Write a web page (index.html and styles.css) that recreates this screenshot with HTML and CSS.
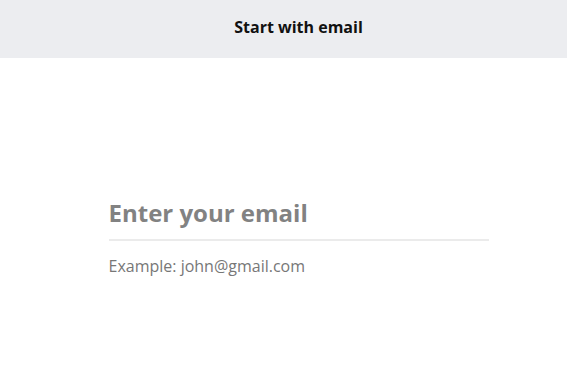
FILE: index.html
```html
<!DOCTYPE html>
<html>
<head>
<meta charset="utf-8">
<link rel="stylesheet" href="styles.css">
</head>
<body>
<header class="topbar"><h1 class="title">Start with email</h1></header>
<main class="content">
  <div class="field">
    <input class="email-input" type="email" placeholder="Enter your email">
    <p class="hint">Example: john@gmail.com</p>
  </div>
</main>
</body>
</html>
```
FILE: styles.css
```css
* { box-sizing: border-box; }
html, body { margin: 0; padding: 0; background: #fff; font-family: "Open Sans", sans-serif; }
.topbar {
  height: 58px;
  background: #ecedf0;
  display: flex;
  align-items: center;
  justify-content: center;
  padding: 0 0 4px 30px;
}
.title {
  margin: 0;
  font-size: 16px;
  font-weight: 700;
  color: #111;
}
.content {
  display: flex;
  justify-content: center;
  padding: 137px 0 0 30px;
}
.field { width: 380px; }
.email-input {
  display: block;
  width: 100%;
  border: 0;
  border-bottom: 2px solid #ebebeb;
  outline: none;
  padding: 0 0 10px 0;
  font-family: "Open Sans", sans-serif;
  font-size: 24px;
  font-weight: 700;
  color: #333;
  line-height: 34px;
  height: 46px;
}
.email-input::placeholder { color: #828282; opacity: 1; }
.hint {
  margin: 14px 0 0 0;
  font-size: 16px;
  color: #777;
  line-height: 22px;
}
```
